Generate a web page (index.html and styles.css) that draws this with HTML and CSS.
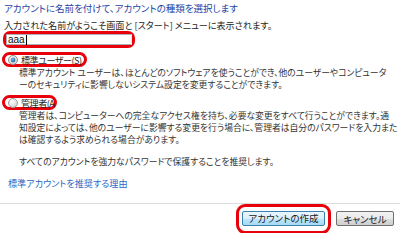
FILE: index.html
```html
<!DOCTYPE html>
<html lang="ja">
<head>
<meta charset="utf-8">
<link rel="stylesheet" href="styles.css">
</head>
<body>
<div class="page">
  <div class="content">
    <p class="title">アカウントに名前を付けて、アカウントの種類を選択します</p>
    <p class="note">入力された名前がようこそ画面と [スタート] メニューに表示されます。</p>
    <div class="ring ring-input">
      <div class="input">aaa<span class="caret"></span></div>
    </div>
    <div class="ring ring-radio ring-std">
      <svg class="radio" width="10" height="10" viewBox="0 0 10 10">
        <defs>
          <radialGradient id="rf" cx="0.4" cy="0.35" r="0.7">
            <stop offset="0" stop-color="#ffffff"/>
            <stop offset="1" stop-color="#d4d4d4"/>
          </radialGradient>
          <radialGradient id="dot" cx="0.4" cy="0.35" r="0.7">
            <stop offset="0" stop-color="#7cc4ef"/>
            <stop offset="1" stop-color="#1c5d91"/>
          </radialGradient>
        </defs>
        <circle cx="5" cy="5" r="4.5" fill="url(#rf)" stroke="#8e8f8f"/>
        <circle cx="5" cy="5" r="2.4" fill="url(#dot)"/>
      </svg>
      <span class="label">標準ユーザー(S)</span>
    </div>
    <p class="desc">標準アカウント ユーザーは、ほとんどのソフトウェアを使うことができ、他のユーザーやコンピュータ<br>ーのセキュリティに影響しないシステム設定を変更することができます。</p>
    <div class="ring ring-radio ring-adm">
      <svg class="radio" width="10" height="10" viewBox="0 0 10 10">
        <defs>
          <radialGradient id="rf2" cx="0.4" cy="0.35" r="0.7">
            <stop offset="0" stop-color="#ffffff"/>
            <stop offset="1" stop-color="#cfcfcf"/>
          </radialGradient>
        </defs>
        <circle cx="5" cy="5" r="4.5" fill="url(#rf2)" stroke="#a0a0a0"/>
      </svg>
      <span class="label">管理者(A</span>
    </div>
    <p class="desc">管理者は、コンピューターへの完全なアクセス権を持ち、必要な変更をすべて行うことができます。通<br>知設定によっては、他のユーザーに影響する変更を行う場合に、管理者は自分のパスワードを入力また<br>は確認するよう求められる場合があります。</p>
    <p class="desc desc-gap">すべてのアカウントを強力なパスワードで保護することを推奨します。</p>
    <p class="link">標準アカウントを推奨する理由</p>
  </div>
  <div class="footer">
    <div class="ring ring-btn"><span class="btn btn-default">アカウントの作成</span></div>
    <span class="btn btn-cancel">キャンセル</span>
  </div>
</div>
</body>
</html>
```

FILE: styles.css
```css
html, body {
  margin: 0;
  padding: 0;
  background: #ffffff;
}
body {
  width: 400px;
  height: 233px;
  overflow: hidden;
  font-family: "Noto Sans CJK JP", "Noto Sans", sans-serif;
  font-size: 9.1px;
  font-feature-settings: "palt";
  color: #1e1e1e;
}
p { margin: 0; }
.page {
  display: flex;
  flex-direction: column;
}
.content {
  padding-left: 4px;
  display: flex;
  flex-direction: column;
  align-items: flex-start;
}
.title {
  margin-top: 2px;
  line-height: 12px;
  font-size: 9.5px;
  color: #1f43a3;
}
.note {
  margin-top: 5px;
  line-height: 12px;
}
.ring {
  border: 3px solid #e8000b;
  border-radius: 7px;
  box-sizing: border-box;
}
.ring-input {
  margin-left: -1px;
  width: 132px;
  height: 17px;
  display: flex;
  align-items: center;
}
.input {
  box-sizing: border-box;
  width: 126px;
  height: 11px;
  border: 1px solid #abadb3;
  border-right-color: #e3e9ef;
  background: #fff;
  display: flex;
  align-items: center;
  padding-left: 1px;
  font-family: "Liberation Sans", sans-serif;
  font-size: 10px;
  line-height: 9px;
  color: #111;
}
.caret {
  display: inline-block;
  width: 1px;
  height: 10px;
  background: #000;
  margin-left: 1px;
}
.ring-radio {
  margin-left: -2px;
  height: 15px;
  display: flex;
  align-items: center;
  padding-left: 3px;
  padding-right: 2px;
  border-radius: 8px;
}
.ring-std {
  margin-top: 4px;
}
.ring-adm {
  margin-top: 4px;
  padding-right: 0;
}
.radio {
  flex: none;
}
.label {
  margin-left: 3px;
  line-height: 12px;
  letter-spacing: -0.5px;
  white-space: nowrap;
}
.desc {
  padding-left: 15px;
  font-size: 8.8px;
  line-height: 12px;
  white-space: nowrap;
  color: #333;
}
.desc-gap {
  margin-top: 10px;
}
.link {
  margin-top: 9px;
  margin-left: 4px;
  line-height: 12px;
  color: #2b68c4;
}
.footer {
  margin-top: 14px;
  border-top: 1px solid #dcdcdc;
  display: flex;
  justify-content: flex-end;
  align-items: flex-start;
  padding-right: 6px;
  gap: 5px;
}
.ring-btn {
  width: 95px;
  height: 30px;
  border-radius: 9px;
  display: flex;
  align-items: center;
  justify-content: center;
  padding-bottom: 2px;
}
.btn {
  box-sizing: border-box;
  height: 15px;
  display: flex;
  align-items: center;
  justify-content: center;
  border-radius: 2px;
  font-size: 9.5px;
  line-height: 12px;
  color: #1a1a1a;
}
.btn-default {
  width: 83px;
  border: 1px solid #3c7fb1;
  background: linear-gradient(#eaf6fd 0%, #d9f0fc 50%, #bee6fd 51%, #a7d9f5 100%);
}
.btn-cancel {
  margin-top: 7px;
  width: 58px;
  border: 1px solid #707070;
  background: linear-gradient(#f2f2f2 0%, #ebebeb 50%, #dddddd 51%, #cfcfcf 100%);
}
```
